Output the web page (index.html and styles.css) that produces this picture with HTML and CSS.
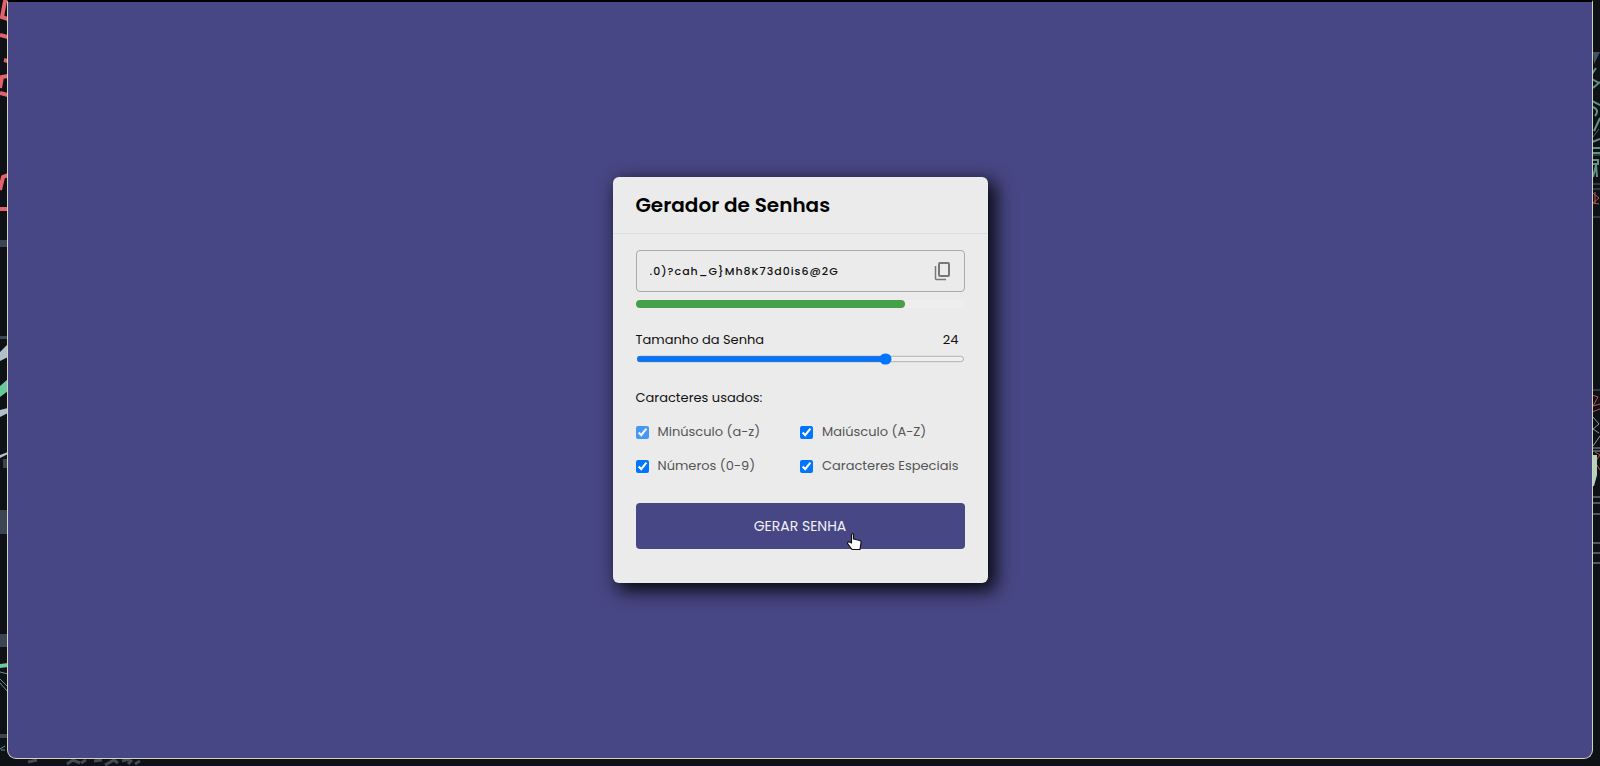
FILE: index.html
```html
<!DOCTYPE html>
<html lang="pt-BR">
<head>
<meta charset="utf-8">
<meta name="viewport" content="width=device-width, initial-scale=1">
<title>Gerador de Senhas</title>
<link rel="stylesheet" href="styles.css">
</head>
<body>
<svg class="art art-left" width="8" height="766" viewBox="0 0 8 766" fill="none" aria-hidden="true">
  <g stroke="#e2636b" stroke-width="4">
    <path d="M8 0 5 1 2 17 8 19M0 35 8 37M4 60 8 61M0 88 2 77 8 76M0 93 8 95M0 190 3 177 8 175M0 209H8" />
  </g>
  <path d="M0 240H8V247H0ZM0 336H8V339H0ZM0 510H8V534H0ZM3 459H8V468H3ZM0 634H8V647H0ZM0 734H8V738H0Z" fill="#3b4553"/>
  <path d="M0 352 8 344V357L0 361ZM0 410 8 408V413L0 417ZM0 455 8 452V454L0 458Z" fill="#b2bfc9"/>
  <path d="M0 386 8 379V391L0 397ZM0 664 8 663V667L0 668Z" fill="#69c99c"/>
  <path d="M0 672 8 674M0 679 8 687M0 683 8 692M0 749 5 746M1 750H5" stroke="#679091"/>
</svg>
<svg class="art art-right" width="8" height="766" viewBox="0 0 8 766" fill="none" aria-hidden="true">
  <path d="M1 52H8L2 64Z" fill="#465363"/>
  <g stroke="#5f9185" stroke-width="2">
    <path d="M0 74 4 68M0 79 7 83M1 88 8 82M0 101 8 105M1 107Q8 110 3 116M8 118 2 131M0 142 8 139M1 148H8M0 153H8M0 160H6V164H1M1 177 4 165 5 177"/>
  </g>
  <path d="M1 137 7 129M0 155H8M0 184H8M0 189H8M0 217H8M0 390H8" stroke="#53606e"/>
  <path d="M1 193 7 198 1 203 7 204M3 192V204M0 395 6 397 1 406 8 404M0 412 8 409M3 452 8 455 3 462 8 470" stroke="#b65359"/>
  <path d="M1 417 7 424 1 429 7 433M1 446 8 436M0 448H8M0 451H8M0 497H8M0 503H8M0 514H8M0 543H8M0 553H8M0 563H8" stroke="#8b9fa4"/>
  <path d="M1 455H5V475L2 486H0Z" fill="#b5d2bd"/>
</svg>
<svg class="art art-bottom" width="150" height="7" viewBox="0 0 150 7" fill="none" stroke="#454b54" stroke-width="3" aria-hidden="true">
  <path d="M28 3 37 1M67 5 73 1 80 4M81 4 86 1M94 2 102 1M105 6 114 1 118 4M122 2 130 0M128 5 132 1M135 5 140 2"/>
</svg>
<div class="window">
  <main class="card">
    <header class="card-header"><h1>Gerador de Senhas</h1></header>
    <form class="content">
      <div class="password-box">
        <input class="password" type="text" aria-label="Senha gerada" value=".0)?cah_G}Mh8K73d0is6@2G" readonly>
        <button class="copy" type="button" aria-label="Copiar senha">
          <svg width="18" height="20" viewBox="0 0 18 20" fill="none" stroke="currentColor" aria-hidden="true"><rect x="6" y="2" width="10" height="13" rx="1" stroke-width="2"/><path d="M2.500 5V17.500Q2.500 18.500 3.500 18.500H13" stroke-width="1.500"/></svg>
        </button>
      </div>
      <div class="strength"><div class="strength-fill" style="width:82%"></div></div>
      <div class="length-row"><label for="length">Tamanho da Senha</label><output for="length">24</output></div>
      <input class="slider" id="length" type="range" min="4" max="30" value="24">
      <fieldset class="characters">
        <legend>Caracteres usados:</legend>
        <div class="options">
          <label class="option"><input class="fixed" type="checkbox" checked>Minúsculo (a-z)</label>
          <label class="option"><input type="checkbox" checked>Maiúsculo (A-Z)</label>
          <label class="option"><input type="checkbox" checked>Números (0-9)</label>
          <label class="option"><input type="checkbox" checked>Caracteres Especiais</label>
        </div>
      </fieldset>
      <button class="generate" type="button">GERAR SENHA
        <svg class="pointer" width="17" height="19" viewBox="0 0 17 19" aria-hidden="true"><path d="M5.500 2.500Q6.500.5 7.500 2.500V7L14 8.500Q15.500 9 15 11L14 17.500H6L1.500 11.500Q1.500 9.500 3.500 10L5.500 11Z" fill="#fff" stroke="#111" stroke-width="1.200" stroke-linejoin="round"/></svg>
      </button>
    </form>
  </main>
</div>
</body>
</html>
```
FILE: styles.css
```css
* { box-sizing: border-box; }

body {
  margin: 0;
  min-height: 100vh;
  display: flex;
  padding: 0 7px 7px;
  background: #0e1217;
  font-family: Poppins, Inter, "Open Sans", sans-serif;
  color: #111;
}

.art { position: absolute; }
.art-left { left: 0; top: 0; }
.art-right { right: 0; top: 0; }
.art-bottom { left: 0; bottom: 0; }

.window {
  position: relative;
  flex: 1;
  display: flex;
  align-items: center;
  justify-content: center;
  border: 1px solid #d5d2bd;
  border-top: 2px solid #000;
  border-radius: 0 0 9px 9px;
  background: #484785;
}

.card {
  width: 375px;
  max-width: 100%;
  border-radius: 6px;
  background: #ebebeb;
  box-shadow: 6px 6px 18px 2px #090912;
}

.card-header {
  padding: 12px 23px;
  border-bottom: 1px solid #dddfe8;
}

h1 {
  margin: 0;
  font-size: 20px;
  line-height: 32px;
  font-weight: 600;
  color: #000;
}

.content {
  display: flex;
  flex-direction: column;
  padding: 16px 23px 34px;
}

.password-box {
  display: flex;
  align-items: center;
  height: 42px;
  padding: 0 13px;
  border: 1px solid #aaa;
  border-radius: 4px;
}

.password {
  flex: 1;
  min-width: 0;
  padding: 0;
  border: 0;
  background: transparent;
  font: 500 11px/20px Poppins, Inter, sans-serif;
  letter-spacing: 1px;
  color: #111;
}

.copy {
  display: flex;
  padding: 0;
  border: 0;
  background: transparent;
  color: #777;
}

.strength {
  height: 8px;
  margin-top: 8px;
  border-radius: 4px;
  background: #eee;
}

.strength-fill {
  height: 100%;
  border-radius: 4px;
  background: #47a047;
}

.length-row {
  display: flex;
  justify-content: space-between;
  margin-top: 21px;
  padding-right: 6px;
  font-size: 13px;
  line-height: 22px;
}

.slider {
  width: 100%;
  height: 20px;
  margin: 0;
  zoom: 0.8;
  accent-color: #0075ff;
}

.characters {
  margin: 20px 0 0;
  padding: 0;
  border: 0;
  font-size: 13px;
  line-height: 22px;
}

legend { padding: 0; }

.options {
  display: grid;
  grid-template-columns: repeat(2, minmax(0, 1fr));
  row-gap: 12px;
  margin-top: 12px;
}

.option {
  display: flex;
  align-items: center;
  gap: 9px;
  white-space: nowrap;
  color: #555;
}

.option input {
  width: 13px;
  height: 13px;
  margin: 0;
  accent-color: #0075ff;
}

.option .fixed { opacity: 0.7; }

.generate {
  position: relative;
  height: 46px;
  margin-top: 26px;
  border: 0;
  border-radius: 4px;
  background: #484785;
  color: #f0f0f5;
  font: 400 14px/22px Poppins, Inter, sans-serif;
  cursor: pointer;
}

.pointer {
  position: absolute;
  left: calc(50% + 46px);
  bottom: -2px;
}
```
